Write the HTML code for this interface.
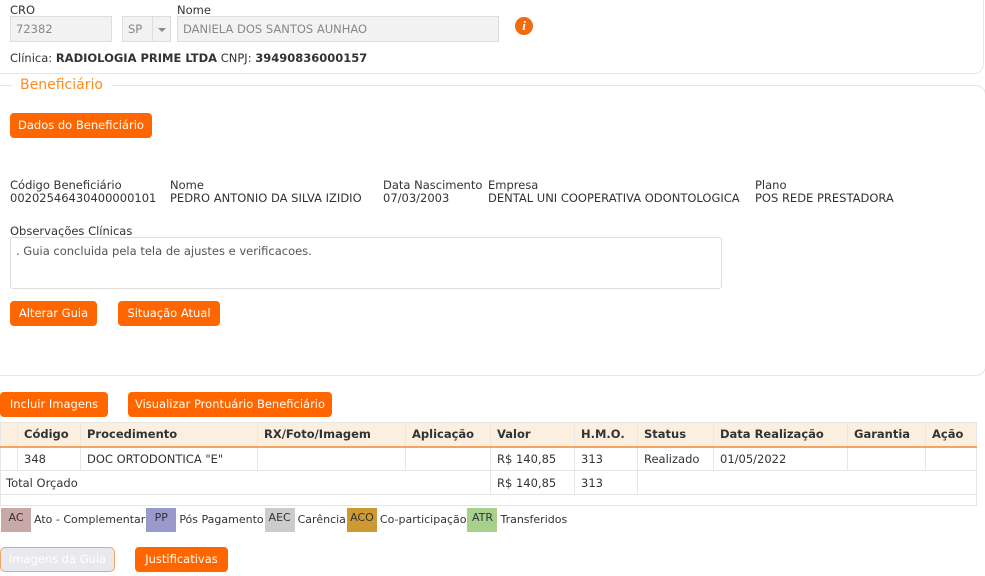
<!DOCTYPE html>
<html><head><meta charset="utf-8">
<style>
*{box-sizing:border-box;margin:0;padding:0}
body{width:985px;height:576px;background:#fff;font-family:"DejaVu Sans","Liberation Sans",sans-serif;font-size:11.5px;color:#333;position:relative;overflow:hidden}
.a{position:absolute;white-space:nowrap}
.inp{position:absolute;background:#f2f2f2;border:1px solid #ddd;color:#888;padding-left:5px;line-height:24px;height:26px}
.btn{position:absolute;background:#ff6600;color:#fff;border-radius:4px;height:25px;line-height:25px;text-align:center;font-size:11.5px}
.lbl{position:absolute;line-height:13px}
table{border-collapse:collapse;position:absolute;left:0;top:422px;width:976px;table-layout:fixed}
td,th{border:1px solid #e6e6e6;height:24px;padding:0 6px;text-align:left;white-space:nowrap;overflow:hidden}
th{background:#fcefe0;font-weight:bold;border-bottom:2px solid #f4a460}
.lg{display:inline-block;height:24px;line-height:20px;vertical-align:middle;color:#333;text-align:center}
.lt{vertical-align:middle;line-height:24px;padding:0 1px 0 3px}
</style></head><body>
<div class="a" style="left:-10px;top:-10px;width:994px;height:84px;border:1px solid #e6e6e6;border-radius:10px"></div>
<div class="lbl" style="left:10px;top:4px">CRO</div>
<div class="lbl" style="left:177px;top:4px">Nome</div>
<div class="inp" style="left:10px;top:16px;width:102px">72382</div>
<div class="inp" style="left:122px;top:16px;width:49px">SP</div>
<div class="a" style="left:152px;top:16px;width:19px;height:26px;border:1px solid #ddd;background:#f2f2f2"></div>
<div class="a" style="left:158px;top:28px;width:0;height:0;border-left:4px solid transparent;border-right:4px solid transparent;border-top:4px solid #888"></div>
<div class="inp" style="left:177px;top:16px;width:322px">DANIELA DOS SANTOS AUNHAO</div>
<div class="a" style="left:515px;top:17px;width:18px;height:18px;border-radius:50%;background:#f26a10;color:#fff;font-weight:bold;font-style:italic;text-align:center;line-height:18px;font-family:'Liberation Serif',serif;font-size:13px">i</div>
<div class="lbl" style="left:10px;top:52px">Clínica: <b>RADIOLOGIA PRIME LTDA</b> CNPJ: <b>39490836000157</b></div>

<div class="a" style="left:-10px;top:85px;width:996px;height:291px;border:1px solid #e6e6e6;border-radius:10px"></div>
<div class="a" style="left:12px;top:76px;background:#fff;padding:0 8px;color:#ff8c1a;font-size:14px;line-height:18px">Beneficiário</div>
<div class="btn" style="left:10px;top:113px;width:142px">Dados do Beneficiário</div>

<div class="lbl" style="left:10px;top:179px">Código Beneficiário<br>00202546430400000101</div>
<div class="lbl" style="left:170px;top:179px">Nome<br>PEDRO ANTONIO DA SILVA IZIDIO</div>
<div class="lbl" style="left:383px;top:179px">Data Nascimento<br>07/03/2003</div>
<div class="lbl" style="left:488px;top:179px">Empresa<br>DENTAL UNI COOPERATIVA ODONTOLOGICA</div>
<div class="lbl" style="left:755px;top:179px">Plano<br>POS REDE PRESTADORA</div>
<div class="lbl" style="left:10px;top:225px">Observações Clínicas</div>
<div class="a" style="left:10px;top:237px;width:712px;height:52px;border:1px solid #ddd;border-radius:3px;padding:6px 5px;color:#555">. Guia concluida pela tela de ajustes e verificacoes.</div>
<div class="btn" style="left:10px;top:301px;width:87px">Alterar Guia</div>
<div class="btn" style="left:118px;top:301px;width:102px">Situação Atual</div>

<div class="btn" style="left:0;top:392px;width:108px">Incluir Imagens</div>
<div class="btn" style="left:128px;top:392px;width:204px">Visualizar Prontuário Beneficiário</div>

<table>
<colgroup><col style="width:17px"><col style="width:63px"><col style="width:177px"><col style="width:148px"><col style="width:85px"><col style="width:84px"><col style="width:63px"><col style="width:76px"><col style="width:134px"><col style="width:78px"><col style="width:51px"></colgroup>
<tr><th style="padding:0"></th><th>Código</th><th>Procedimento</th><th>RX/Foto/Imagem</th><th>Aplicação</th><th>Valor</th><th>H.M.O.</th><th>Status</th><th>Data Realização</th><th>Garantia</th><th>Ação</th></tr>
<tr><td style="padding:0"></td><td>348</td><td>DOC ORTODONTICA "E"</td><td></td><td></td><td>R$ 140,85</td><td>313</td><td>Realizado</td><td>01/05/2022</td><td></td><td></td></tr>
<tr><td colspan="5" style="padding-left:5px">Total Orçado</td><td>R$ 140,85</td><td>313</td><td colspan="4"></td></tr>
<tr><td colspan="11" style="height:11px"></td></tr>
</table>

<div class="a" style="left:1px;top:508px;line-height:24px;font-size:11px">
<span class="lg" style="background:#c9a8a8;width:30px">AC</span><span class="lt">Ato - Complementar</span><span class="lg" style="background:#9999cc;width:30px">PP</span><span class="lt">Pós Pagamento</span><span class="lg" style="background:#cccccc;width:30px">AEC</span><span class="lt">Carência</span><span class="lg" style="background:#cc9933;width:30px">ACO</span><span class="lt">Co-participação</span><span class="lg" style="background:#a8d08d;width:30px">ATR</span><span class="lt">Transferidos</span>
</div>
<div class="a" style="left:0;top:547px;width:115px;height:25px;border:1px solid #f4a460;border-radius:5px;background:#e8e8ee;color:#fff;text-align:center;line-height:23px">Imagens da Guia</div>
<div class="btn" style="left:135px;top:547px;width:93px">Justificativas</div>
</body></html>
